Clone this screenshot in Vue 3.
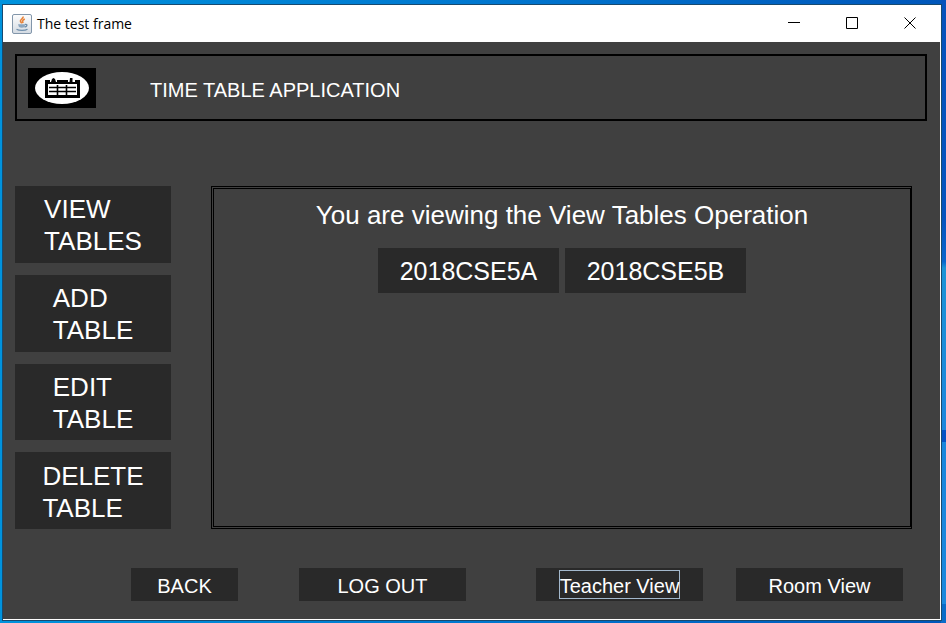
<script setup>
import { ref } from 'vue'

const operations = [
  ['VIEW', 'TABLES'],
  ['ADD', 'TABLE'],
  ['EDIT', 'TABLE'],
  ['DELETE', 'TABLE'],
]
const tables = ['2018CSE5A', '2018CSE5B']
const focused = ref('Teacher View')
</script>

<template>
  <div class="desktop">
    <div class="window">
      <header class="titlebar">
        <svg class="java" viewBox="0 0 20 20" aria-hidden="true">
          <defs>
            <linearGradient id="tile" x1="0" y1="0" x2="0" y2="1">
              <stop offset="0" stop-color="#fdfdfd" />
              <stop offset="1" stop-color="#d3dae2" />
            </linearGradient>
          </defs>
          <rect x="0.5" y="0.5" width="19" height="19" rx="1.5" fill="url(#tile)" stroke="#8296aa" />
          <path d="M11 2.500C12 4.500 7.500 5.500 8.500 7.500L9.800 9.200M12.800 5C10.500 6 10 7.200 11.200 9" fill="none" stroke="#e8843a" stroke-width="1.6" />
          <path d="M6 10.200H13.200L12.500 13C11 14 8.500 14 7 13Z" fill="#8ba6bf" />
          <path d="M13 10.500C15.800 10 15.500 12.500 12.600 13M4.500 15.300C7 16.800 13 16.800 15.500 15.300" fill="none" stroke="#6f8fac" stroke-width="1.300" />
        </svg>
        <span class="caption">The test frame</span>
        <div class="controls">
          <button type="button" aria-label="Minimize">
            <svg viewBox="0 0 13 13"><path d="M0 5.500H12" /></svg>
          </button>
          <button type="button" aria-label="Maximize">
            <svg viewBox="0 0 13 13"><path d="M0.500 0.500H11.500V11.500H0.500Z" /></svg>
          </button>
          <button type="button" aria-label="Close">
            <svg viewBox="0 0 13 13"><path d="M0.500 0.500L11.500 11.500M11.500 0.500L0.500 11.500" /></svg>
          </button>
        </div>
      </header>

      <div class="content">
        <div class="banner">
          <svg class="logo" viewBox="0 0 68 40" aria-hidden="true">
            <rect width="68" height="40" fill="#000" />
            <ellipse cx="34" cy="20" rx="27" ry="16" fill="#fff" />
            <path d="M17 12H52V30H17Z" fill="#000" />
            <path d="M22 12H29V14H22ZM40 12H47V14H40Z" fill="#fff" />
            <path d="M24 11L25.500 10L27 11L28 14H23ZM42 10H44.500V14H41.500Z" fill="#000" />
            <path d="M20 16H49V28H20Z" fill="#fff" />
            <path
              d="M21 17H29V19H21ZM31 17H38V19H31ZM40 17H48V19H40Z"
              fill="#fff"
            />
            <path d="M21 19.500H48M21 23.500H48" stroke="#000" stroke-width="1.300" />
            <path d="M29.500 17V27M38.500 17V27" stroke="#000" stroke-width="1.600" />
            <path d="M20 27.500H49" stroke="#000" stroke-width="1" />
          </svg>
          <h1>TIME TABLE APPLICATION</h1>
        </div>

        <main class="body">
          <nav class="sidebar">
            <button v-for="op in operations" :key="op[0]" type="button">
              <span>{{ op[0] }}<br />{{ op[1] }}</span>
            </button>
          </nav>
          <section class="panel">
            <h2>You are viewing the View Tables Operation</h2>
            <div class="tables">
              <button v-for="t in tables" :key="t" type="button">{{ t }}</button>
            </div>
          </section>
        </main>

        <footer class="actions">
          <div class="session">
            <button type="button" class="back"><span>BACK</span></button>
            <button type="button"><span>LOG OUT</span></button>
          </div>
          <div class="views">
            <button
              v-for="v in ['Teacher View', 'Room View']"
              :key="v"
              type="button"
              @focus="focused = v"
            >
              <span :class="{ focused: focused === v }">{{ v }}</span>
            </button>
          </div>
        </footer>
      </div>
    </div>
  </div>
</template>

<style>
body {
  margin: 0;
}
</style>

<style scoped>
.desktop {
  box-sizing: border-box;
  min-height: 100vh;
  display: flex;
  padding: 4px 4px 2px 2px;
  background:
    linear-gradient(
      #0652bb,
      #0654be 35%,
      #0a66cc 42%,
      #1c93d6 43%,
      #1c86dc 69%,
      #0652c4 69%,
      #0652c4 71%,
      #1a86dc 71%,
      #1c88dc 97%,
      #0a6cc8 97%
    ) right / 5px 100% no-repeat,
    linear-gradient(90deg, #0093dd, #0078d0 50%, #0056ba);
  font-family: "Liberation Sans", Arial, sans-serif;
}
.window {
  flex: 1;
  display: flex;
  flex-direction: column;
  border: 1px solid #174a70;
  background: #fff;
}
.titlebar {
  height: 37px;
  display: flex;
  align-items: center;
  padding: 0 2px 0 9px;
  color: #000;
}
.java {
  width: 20px;
  height: 20px;
}
.caption {
  margin-left: 5px;
  font: 14px/20px "Open Sans", "Noto Sans", sans-serif;
}
.controls {
  display: flex;
  margin-left: auto;
}
.controls button {
  width: 58px;
  height: 37px;
  display: grid;
  place-items: center;
}
.controls svg {
  width: 13px;
  height: 13px;
  fill: none;
  stroke: #000;
}
button {
  border: 0;
  padding: 0;
  background: none;
  color: inherit;
  font: inherit;
  outline: none;
}
.content {
  flex: 1;
  display: flex;
  flex-direction: column;
  margin: 0 1px 1px 0;
  padding: 12px 13px 18px 12px;
  background: #404040;
  color: #fff;
}
.content button {
  background: #292929;
}
.banner {
  display: flex;
  align-items: center;
  gap: 54px;
  padding: 12px 11px 11px;
  border: 2px solid #000;
}
.logo {
  width: 68px;
  height: 40px;
}
h1,
h2 {
  margin: 0;
  font-weight: 400;
}
h1 {
  padding-top: 4px;
  font-size: 20px;
  line-height: 24px;
}
.body {
  flex: 1;
  display: grid;
  grid-template-columns: 156px 1fr;
  gap: 40px;
  margin: 65px 15px 39px 0;
  font-size: 26px;
}
.sidebar {
  display: grid;
  grid-auto-rows: 1fr;
  gap: 12px;
}
.sidebar button {
  padding-top: 2px;
  line-height: 32px;
}
.sidebar span {
  display: inline-block;
  text-align: left;
}
.panel {
  border: 3px double #000;
  border-right: 2px solid #000;
  padding-top: 10px;
  text-align: center;
}
h2 {
  font-size: 26px;
  line-height: 32px;
}
.tables {
  display: flex;
  justify-content: center;
  gap: 6px;
  margin-top: 17px;
}
.tables button {
  width: 181px;
  height: 45px;
  padding-top: 2px;
  font-size: 25px;
}
.actions {
  display: flex;
  justify-content: space-between;
  padding: 0 24px 0 116px;
  font-size: 20px;
}
.actions button {
  width: 167px;
  height: 33px;
}
.actions .back {
  width: 107px;
}
.session {
  display: flex;
  gap: 61px;
}
.views {
  display: flex;
  gap: 33px;
}
.actions span {
  display: inline-block;
  border: 1px solid transparent;
  padding-top: 3px;
  line-height: 24px;
}
.actions .focused {
  border-color: #a3b8cc;
}
</style>
